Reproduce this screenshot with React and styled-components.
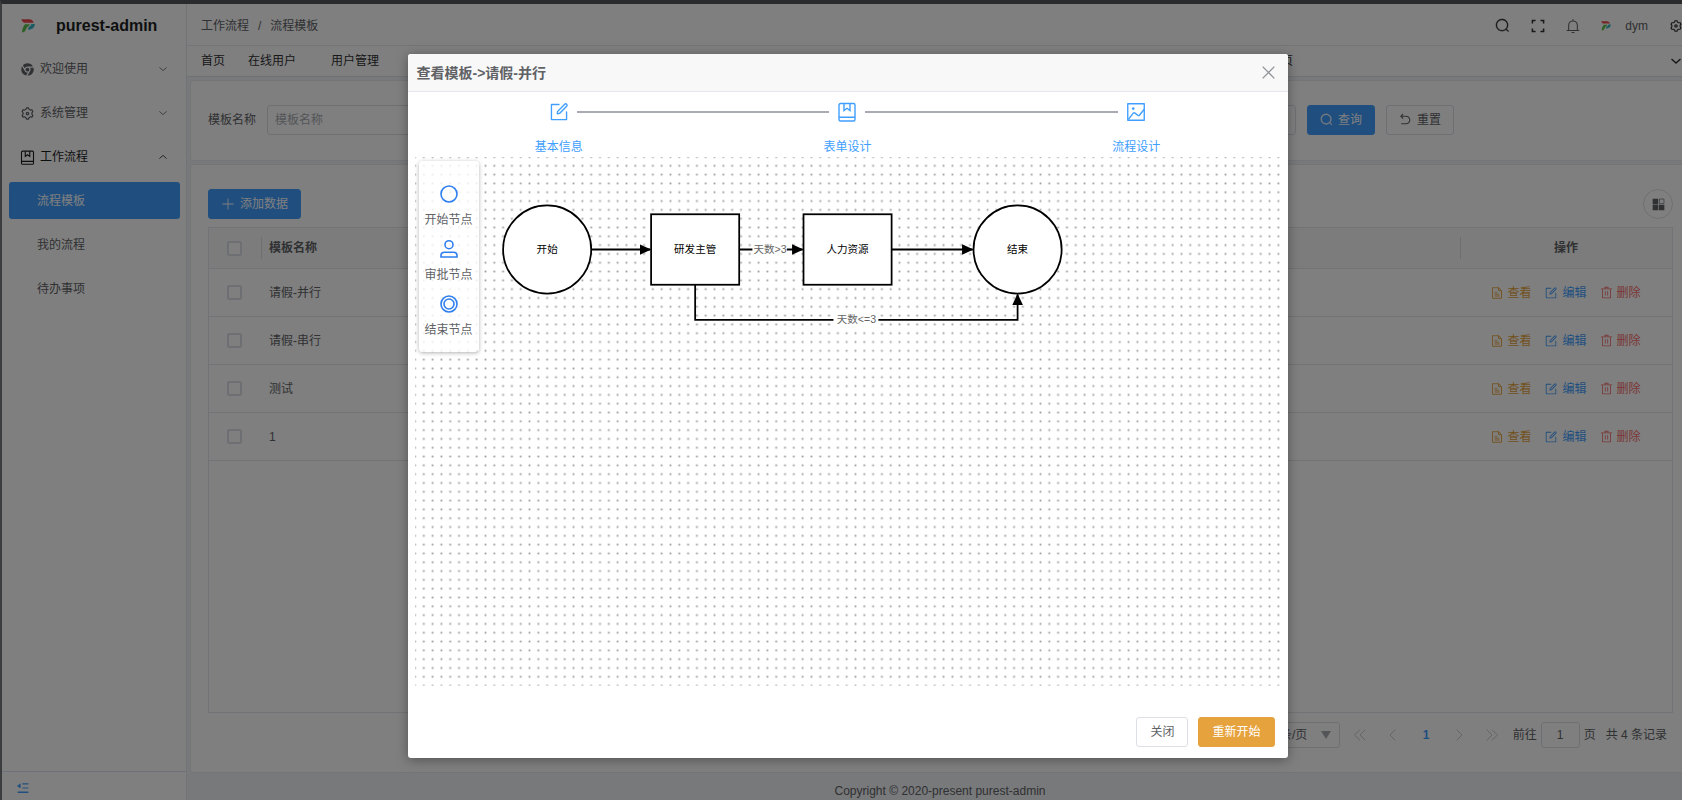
import React, { useState } from "react";
import styled, { createGlobalStyle } from "styled-components";
import { RiChromeFill, RiSettings3Line, RiArrowGoBackLine } from "react-icons/ri";

const GlobalStyle = createGlobalStyle`
  * {
    box-sizing: border-box;
  }

  body {
    margin: 0;
    overflow: hidden;
    background: #2a2b2d;
    font-family: "Liberation Sans", "Noto Sans CJK SC", sans-serif;
    font-size: 12px;
    line-height: 20px;
    color: #303133;
  }

  button,
  input,
  select {
    font: inherit;
    color: inherit;
  }

  svg {
    display: block;
    flex: none;
  }
`;

/* icons */

const Icon = ({ size = 14, children, box = 1024 }) => (
  <svg width={size} height={size} viewBox={`0 0 ${box} ${box}`} fill="currentColor" aria-hidden="true">
    {children}
  </svg>
);

const LineIcon = ({ size = 14, weight = 1.5, children }) => (
  <svg
    width={size}
    height={size}
    viewBox="0 0 20 20"
    fill="none"
    stroke="currentColor"
    strokeWidth={weight}
    aria-hidden="true"
  >
    {children}
  </svg>
);

const SearchIcon = ({ size }) => (
  <Icon size={size}>
    <path d="m795.904 750.72 124.992 124.928a32 32 0 0 1-45.248 45.248L750.656 795.904a416 416 0 1 1 45.248-45.248zM480 832a352 352 0 1 0 0-704 352 352 0 0 0 0 704" stroke="currentColor" strokeWidth="24" />
  </Icon>
);

const EditIcon = ({ size }) => (
  <Icon size={size}>
    <path d="M832 512a32 32 0 1 1 64 0v352a32 32 0 0 1-32 32H160a32 32 0 0 1-32-32V160a32 32 0 0 1 32-32h352a32 32 0 0 1 0 64H192v640h640z" />
    <path d="m469.952 554.24 52.8-7.552L847.104 222.4a32 32 0 1 0-45.248-45.248L477.44 501.44l-7.552 52.8zm422.4-422.4a96 96 0 0 1 0 135.808l-331.84 331.84a32 32 0 0 1-18.112 9.088L436.8 623.68a32 32 0 0 1-36.224-36.224l15.104-105.6a32 32 0 0 1 9.024-18.112l331.904-331.84a96 96 0 0 1 135.744 0z" />
  </Icon>
);

const DeleteIcon = ({ size }) => (
  <Icon size={size}>
    <path d="M160 256H96a32 32 0 0 1 0-64h256V95.936a32 32 0 0 1 32-32h256a32 32 0 0 1 32 32V192h256a32 32 0 1 1 0 64h-64v672a32 32 0 0 1-32 32H192a32 32 0 0 1-32-32zm448-64v-64H416v64zM224 896h576V256H224zm192-128a32 32 0 0 1-32-32V416a32 32 0 0 1 64 0v320a32 32 0 0 1-32 32m192 0a32 32 0 0 1-32-32V416a32 32 0 0 1 64 0v320a32 32 0 0 1-32 32" />
  </Icon>
);

const PlusIcon = ({ size }) => (
  <Icon size={size}>
    <path d="M480 480V128a32 32 0 0 1 64 0v352h352a32 32 0 1 1 0 64H544v352a32 32 0 1 1-64 0V544H128a32 32 0 0 1 0-64z" />
  </Icon>
);

const PictureIcon = ({ size }) => (
  <Icon size={size}>
    <path d="M160 160v704h704V160zm-32-64h768a32 32 0 0 1 32 32v768a32 32 0 0 1-32 32H128a32 32 0 0 1-32-32V128a32 32 0 0 1 32-32" />
    <path d="M384 288q64 0 64 64t-64 64q-64 0-64-64t64-64M185.408 876.992l-50.816-38.912L350.72 556.032a96 96 0 0 1 134.592-17.856l1.856 1.472 122.88 99.136a32 32 0 0 0 44.992-4.864l216-269.888 49.92 39.936-215.808 269.824-.256.32a96 96 0 0 1-135.04 14.464l-122.88-99.072-.64-.512a32 32 0 0 0-44.8 5.952z" />
  </Icon>
);

const BookIcon = ({ size, weight }) => (
  <LineIcon size={size} weight={weight}>
    <rect x="2" y="1.5" width="16" height="17.5" rx="1.5" />
    <path d="M2 15.2h16M7 1.5v7l3-2.2 3 2.2v-7" />
  </LineIcon>
);

const DocumentIcon = ({ size }) => (
  <LineIcon size={size} weight={1.5}>
    <path d="M2.500 1.200h10.500L17.500 6v12.800h-15zM12.500 1.200v5h5M6 9h4M6 12h8M6 15h8" />
  </LineIcon>
);

const FullscreenIcon = ({ size }) => (
  <LineIcon size={size} weight={2.2}>
    <path d="M2 6.500V2h4.500M13.500 2H18v4.500M18 13.500V18h-4.500M6.500 18H2v-4.500" />
  </LineIcon>
);

const BellIcon = ({ size }) => (
  <LineIcon size={size} weight={1.5}>
    <path d="M1 16.5h18M3.8 16.5V9a6.2 6.2 0 0 1 12.4 0v7.5M10 .3v2.4M8 19.2h4" />
  </LineIcon>
);

const CloseIcon = ({ size }) => (
  <LineIcon size={size} weight={2}>
    <path d="M1 1l18 18M19 1 1 19" />
  </LineIcon>
);

const Chevron = ({ size = 10, weight = 2, d }) => (
  <LineIcon size={size} weight={weight}>
    <path d={d} />
  </LineIcon>
);

const DOWN = "M1 6l9 8 9-8";
const UP = "M1 14l9-8 9 8";
const LEFT = "M14 1 5 10l9 9";
const RIGHT = "M6 1l9 9-9 9";
const LEFT_DOUBLE = "M10 1 1 10l9 9M19 1l-9 9 9 9";
const RIGHT_DOUBLE = "M1 1l9 9-9 9M10 1l9 9-9 9";

const BlocksIcon = ({ size }) => (
  <Icon size={size} box={20}>
    <path d="M1 1h8.500v8.500H1zM1 10.500h8.500V19H1zM10.500 10.500H19V19h-8.500z" />
    <path d="M11.4 1.600h7v7h-7z" fill="none" stroke="currentColor" strokeWidth="1" />
  </Icon>
);

const FoldIcon = ({ size }) => (
  <Icon size={size} box={20}>
    <path d="M9 2h10v2H9zM9 9h10v2H9zM1 16h18v2.4H1zM0 6.5 6 2v9z" />
  </Icon>
);

const Logo = ({ size }) => (
  <Icon size={size} box={42}>
    <path d="M1 1h24c7 0 11 4 13 10H9C5 9 2 5 1 1z" fill="#f0484f" />
    <path d="M12 16h15l-4 5c-6 3-7 9-10 14-2 4-5 5-10 5 1-9 3-18 9-24z" fill="#5fc24c" />
    <path d="M31 15h10.500c0 9-6 16-17.500 17l-4-1 4-8c4-1 6-4 7-8z" fill="#35b8c9" />
  </Icon>
);

/* page shell; runs a little past the right and bottom of the window */

const Frame = styled.div`
  position: relative;
  display: flex;
  width: calc(100% + 11px);
  height: calc(100vh + 8px);
  border-top: 4px solid #2a2b2d;
  border-left: 2px solid #3c3d3f;
  background: #f0f2f5;
`;

const Sidebar = styled.aside`
  display: flex;
  flex-direction: column;
  width: 185px;
  flex: none;
  background: #fff;
  border-right: 1px solid #e4e7ed;
`;

const Brand = styled.h1`
  display: flex;
  align-items: center;
  gap: 21px;
  height: 43px;
  margin: 0;
  padding-left: 19px;
  font-size: 16px;
  font-weight: bold;
  color: #1d1e1f;
`;

const Menu = styled.nav`
  flex: 1;
`;

const MenuButton = styled.button`
  display: flex;
  align-items: center;
  gap: 5px;
  width: 100%;
  height: 44px;
  padding: 0 19px 0 18px;
  border: 0;
  background: none;
  text-align: left;
  color: ${(props) => (props.$open ? "#1d1e1f" : "#606266")};

  span {
    flex: 1;
  }
`;

const SubLink = styled.a`
  display: flex;
  align-items: center;
  height: 37px;
  margin: 3px 6px 7px 7px;
  padding-left: 28px;
  border-radius: 3px;
  text-decoration: none;
  color: ${(props) => (props.$active ? "#fff" : "#606266")};
  background: ${(props) => (props.$active ? "#409eff" : "none")};
`;

const FoldBar = styled.button`
  display: flex;
  align-items: center;
  height: 37px;
  padding: 0 0 4px 15px;
  border: 0;
  border-top: 1px solid #dce4f0;
  background: none;
  color: #409eff;
`;

const Main = styled.div`
  display: flex;
  flex-direction: column;
  flex: 1;
  min-width: 0;
`;

const Header = styled.header`
  display: flex;
  align-items: center;
  height: 42px;
  padding: 2px 10px 0 14px;
  background: #fff;
  border-bottom: 1px solid #e8eaee;
`;

const Breadcrumb = styled.nav`
  display: flex;
  gap: 9px;
  flex: 1;
  color: #606266;
`;

const HeaderTools = styled.div`
  display: flex;
  align-items: center;
  gap: 21px;
`;

const IconButton = styled.button`
  display: flex;
  padding: 0;
  border: 0;
  background: none;
  color: ${(props) => props.$color || "#303133"};
`;

const User = styled.div`
  display: flex;
  align-items: center;
  gap: 14px;
  color: #606266;
`;

const TabBar = styled.nav`
  display: flex;
  align-items: center;
  height: 31px;
  padding: 0 12px 0 2px;
  background: #fff;
  border-bottom: 1px solid #dfe3ea;
`;

const Tab = styled.a`
  padding: 0 ${(props) => (props.$closable ? 23 : 11)}px 0 12px;
  color: #303133;
  text-decoration: none;
`;

const TabGap = styled.div`
  flex: 0 1 867px;
`;

const TabMore = styled.div`
  margin-left: auto;
`;

const Card = styled.section`
  display: flex;
  flex-direction: column;
  margin: 3px 2px 0 3px;
  background: #fff;
  border: 1px solid #e8eaee;
  border-radius: 3px;
`;

const QueryForm = styled.form`
  display: flex;
  align-items: center;
  gap: 11px;
  height: 79px;
  padding: 16px 17px 18px;

  label {
    flex: none;
    color: #606266;
  }
`;

const TextInput = styled.input`
  flex: 0 1 ${(props) => props.$width}px;
  min-width: 0;
  height: 30px;
  padding: 0 7px;
  border: 1px solid #dcdfe6;
  border-radius: 3px;
  background: #fff;
  text-align: ${(props) => props.$align || "left"};

  &::placeholder {
    color: #a8abb2;
  }
`;

const Button = styled.button`
  display: flex;
  align-items: center;
  justify-content: center;
  flex: none;
  gap: 5px;
  height: 30px;
  padding: 0 12px;
  border: 1px solid ${(props) => props.$bg || "#dcdfe6"};
  border-radius: 3px;
  background: ${(props) => props.$bg || "#fff"};
  color: ${(props) => (props.$bg ? "#fff" : "#606266")};
`;

const ListCard = styled(Card)`
  flex: 1;
  padding: 24px 17px 0;
`;

const Toolbar = styled.div`
  display: flex;
  justify-content: space-between;
  margin-bottom: 8px;
`;

const RoundButton = styled.button`
  display: flex;
  align-items: center;
  justify-content: center;
  width: 30px;
  height: 30px;
  padding: 0;
  border: 1px solid #dcdfe6;
  border-radius: 50%;
  background: #fff;
  color: #606266;
`;

const TableWrap = styled.div`
  flex: 1;
  border: 1px solid #e4e7ed;
`;

const Table = styled.table`
  width: 100%;
  table-layout: fixed;
  border-collapse: separate;
  border-spacing: 0;

  th,
  td {
    height: 48px;
    padding: 0 8px;
    text-align: left;
    font-weight: normal;
    color: #606266;
    border-bottom: 1px solid #e4e7ed;
  }

  th {
    height: 41px;
    font-weight: bold;
    background: #f8f8f9;
  }

  th:first-child,
  td:first-child {
    width: 52px;
    padding-left: 18px;
  }

  th:last-child,
  td:last-child {
    width: 212px;
    text-align: center;
  }
`;

const HeadCell = styled.div`
  display: flex;
  align-items: center;
  height: 22px;
  margin-left: -8px;
  padding-left: 7px;
  justify-content: ${(props) => (props.$center ? "center" : "flex-start")};
  border-left: 1px solid #dcdfe6;
`;

const Checkbox = styled.input`
  display: block;
  appearance: none;
  width: 15px;
  height: 15px;
  margin: 0;
  border: 2px solid #dcdfe6;
  border-radius: 2px;
  background: #fff;
`;

const Actions = styled.div`
  display: flex;
  justify-content: center;
  gap: 13px;
`;

const Action = styled.button`
  display: flex;
  align-items: center;
  gap: 4px;
  padding: 0;
  border: 0;
  background: none;
  color: ${(props) => props.$color};
`;

const Pager = styled.div`
  display: flex;
  align-items: center;
  justify-content: flex-end;
  height: 59px;
  padding: 0 6px 16px 0;
  color: #606266;
`;

const PageSize = styled.label`
  position: relative;
  margin-right: 4px;

  select {
    appearance: none;
    display: block;
    width: 90px;
    height: 26px;
    padding: 0 0 0 16px;
    border: 1px solid #dcdfe6;
    border-radius: 3px;
    background: #fff;
  }

  svg {
    position: absolute;
    top: 8px;
    right: 9px;
    color: #a8abb2;
  }
`;

const PageNav = styled.div`
  display: flex;
  align-items: center;
  margin-right: 4px;

  button {
    display: flex;
    align-items: center;
    justify-content: center;
    width: 33px;
    padding: 0;
    border: 0;
    background: none;
    color: #c0c4cc;
  }

  button[aria-current] {
    font-weight: bold;
    color: #409eff;
  }
`;

const Jump = styled.label`
  display: flex;
  align-items: center;
  gap: 4px;
  margin-right: 10px;

  input {
    flex: none;
    width: 39px;
    height: 26px;
    padding: 0;
  }
`;

const Footer = styled.footer`
  display: flex;
  align-items: center;
  justify-content: center;
  height: 35px;
  color: #606266;
`;

/* dialog */

const Overlay = styled.div`
  position: absolute;
  inset: 0;
  display: flex;
  align-items: center;
  justify-content: center;
  background: rgba(0, 0, 0, 0.5);
`;

const Dialog = styled.div`
  width: 880px;
  max-width: 94%;
  background: #fff;
  border-radius: 3px;
  overflow: hidden;
  box-shadow: 0 2px 12px rgba(0, 0, 0, 0.35);
`;

const DialogHead = styled.div`
  display: flex;
  align-items: center;
  justify-content: space-between;
  height: 38px;
  padding: 0 13px 0 9px;
  background: #f8f8f8;
  border-bottom: 1px solid #e4e7ed;

  h2 {
    margin: 0;
    font-size: 14px;
    color: #606266;
  }
`;

const Steps = styled.ol`
  display: grid;
  grid-template-columns: repeat(3, 1fr);
  height: 65px;
  margin: 0;
  padding: 9px 7px 0;
  list-style: none;
`;

const Step = styled.li`
  position: relative;
  display: flex;
  flex-direction: column;
  align-items: center;
  gap: 14px;
  color: #409eff;

  svg {
    height: 22px;
  }

  &:not(:last-child)::after {
    content: "";
    position: absolute;
    top: 10px;
    left: calc(50% + 18px);
    width: calc(100% - 36px);
    height: 2px;
    background: #a8abb2;
  }
`;

const Canvas = styled.div`
  position: relative;
  margin: 0 7px;

  > svg {
    width: 100%;
    height: auto;
    aspect-ratio: 866 / 529;
  }
`;

const Palette = styled.div`
  position: absolute;
  top: 4px;
  left: 4px;
  display: flex;
  flex-direction: column;
  gap: 9px;
  padding: 23px 6px 12px;
  border-radius: 4px;
  background: rgba(255, 255, 255, 0.8);
  box-shadow: 0 1px 4px rgba(0, 0, 0, 0.3);
`;

const PaletteItem = styled.div`
  display: flex;
  flex-direction: column;
  align-items: center;
  gap: 6px;
  color: #606266;

  svg {
    color: #2f7fee;
  }
`;

const DialogFoot = styled.div`
  display: flex;
  justify-content: flex-end;
  gap: 10px;
  padding: 31px 13px 11px;

  button {
    padding: 0 13px;
  }
`;

const NodeText = styled.text`
  font-size: 12px;
  text-anchor: middle;
  fill: ${(props) => (props.$edge ? "#666" : "#000")};
`;

const nodes = [
  { type: "circle", x: 150, text: "开始" },
  { type: "rect", x: 318, text: "研发主管" },
  { type: "rect", x: 491, text: "人力资源" },
  { type: "circle", x: 684, text: "结束" },
];

const NODE_Y = 105;

function FlowChart() {
  return (
    <svg viewBox="0 0 983 600" preserveAspectRatio="xMinYMin meet">
      <defs>
        <pattern id="dots" x="-5" y="-5" width="10" height="10" patternUnits="userSpaceOnUse">
          <rect x="4" y="4" width="2" height="2" fill="#999" />
        </pattern>
        <marker id="arrow" markerUnits="userSpaceOnUse" markerWidth="14" markerHeight="14" refX="12" refY="7" orient="auto">
          <path d="M0 1l13 6-13 6z" />
        </marker>
      </defs>
      <rect width="983" height="600" fill="url(#dots)" />
      <g fill="none" stroke="#000" strokeWidth="2">
        <path d="M200 105h67" markerEnd="url(#arrow)" />
        <path d="M368 105h72" markerEnd="url(#arrow)" />
        <path d="M541 105h92" markerEnd="url(#arrow)" />
        <path d="M318 145v40h366v-29" markerEnd="url(#arrow)" />
      </g>
      {nodes.map((n) => (
        <g key={n.text}>
          {n.type === "circle" ? (
            <circle cx={n.x} cy={NODE_Y} r="50" fill="#fff" stroke="#000" strokeWidth="2" />
          ) : (
            <rect x={n.x - 50} y={NODE_Y - 40} width="100" height="80" fill="#fff" stroke="#000" strokeWidth="2" />
          )}
          <NodeText x={n.x} y={NODE_Y + 4}>
            {n.text}
          </NodeText>
        </g>
      ))}
      <rect x="383" y="97" width="39" height="16" fill="#fff" />
      <NodeText $edge x="403" y="109">
        天数&gt;3
      </NodeText>
      <rect x="475" y="177" width="51" height="16" fill="#fff" />
      <NodeText $edge x="501" y="188">
        天数&lt;=3
      </NodeText>
    </svg>
  );
}

const steps = [
  { text: "基本信息", icon: <EditIcon size={22} /> },
  { text: "表单设计", icon: <BookIcon size={20} weight={1.4} /> },
  { text: "流程设计", icon: <PictureIcon size={22} /> },
];

const palette = [
  { text: "开始节点", icon: <circle cx="10" cy="10" r="8" /> },
  {
    text: "审批节点",
    icon: (
      <>
        <circle cx="10" cy="5.700" r="4" />
        <path d="M2 18v-1.500c0-2 1.500-3.300 3.500-3.300h9c2 0 3.500 1.300 3.500 3.300V18z" />
      </>
    ),
  },
  {
    text: "结束节点",
    icon: (
      <>
        <circle cx="10" cy="10" r="8" />
        <circle cx="10" cy="10" r="5" />
      </>
    ),
  },
];

function TemplateDialog({ onClose }) {
  return (
    <Overlay>
      <Dialog role="dialog" aria-labelledby="dialog-title">
        <DialogHead>
          <h2 id="dialog-title">查看模板-&gt;请假-并行</h2>
          <IconButton $color="#909399" aria-label="关闭" onClick={onClose}>
            <CloseIcon size={13} />
          </IconButton>
        </DialogHead>
        <Steps>
          {steps.map((s) => (
            <Step key={s.text}>
              {s.icon}
              {s.text}
            </Step>
          ))}
        </Steps>
        <Canvas>
          <FlowChart />
          <Palette>
            {palette.map((p) => (
              <PaletteItem key={p.text}>
                <LineIcon size={20} weight={1.6}>
                  {p.icon}
                </LineIcon>
                {p.text}
              </PaletteItem>
            ))}
          </Palette>
        </Canvas>
        <DialogFoot>
          <Button onClick={onClose}>关闭</Button>
          <Button $bg="#e6a23c">重新开始</Button>
        </DialogFoot>
      </Dialog>
    </Overlay>
  );
}

const rows = ["请假-并行", "请假-串行", "测试", "1"];

function TemplateTable() {
  return (
    <Table>
      <thead>
        <tr>
          <th>
            <Checkbox type="checkbox" aria-label="全选" />
          </th>
          <th>
            <HeadCell>模板名称</HeadCell>
          </th>
          <th>
            <HeadCell $center>操作</HeadCell>
          </th>
        </tr>
      </thead>
      <tbody>
        {rows.map((name) => (
          <tr key={name}>
            <td>
              <Checkbox type="checkbox" aria-label={name} />
            </td>
            <td>{name}</td>
            <td>
              <Actions>
                <Action $color="#e6a23c">
                  <DocumentIcon size={12} />
                  查看
                </Action>
                <Action $color="#409eff">
                  <EditIcon size={14} />
                  编辑
                </Action>
                <Action $color="#f56c6c">
                  <DeleteIcon size={13} />
                  删除
                </Action>
              </Actions>
            </td>
          </tr>
        ))}
      </tbody>
    </Table>
  );
}

function App() {
  const [open, setOpen] = useState(true);

  return (
    <>
      <GlobalStyle />
      <Frame>
        <Sidebar>
          <Brand>
            <Logo size={14} />
            purest-admin
          </Brand>
          <Menu>
            <MenuButton>
              <RiChromeFill size={15} />
              <span>欢迎使用</span>
              <Chevron d={DOWN} size={8} />
            </MenuButton>
            <MenuButton>
              <RiSettings3Line size={15} />
              <span>系统管理</span>
              <Chevron d={DOWN} size={8} />
            </MenuButton>
            <MenuButton $open>
              <BookIcon size={15} weight={1.5} />
              <span>工作流程</span>
              <Chevron d={UP} size={8} />
            </MenuButton>
            <SubLink $active href="#template">
              流程模板
            </SubLink>
            <SubLink href="#mine">我的流程</SubLink>
            <SubLink href="#todo">待办事项</SubLink>
          </Menu>
          <FoldBar aria-label="折叠菜单">
            <FoldIcon size={12} />
          </FoldBar>
        </Sidebar>

        <Main>
          <Header>
            <Breadcrumb>
              <span>工作流程</span>
              <span>/</span>
              <span>流程模板</span>
            </Breadcrumb>
            <HeaderTools>
              <IconButton aria-label="搜索">
                <SearchIcon size={15} />
              </IconButton>
              <IconButton aria-label="全屏">
                <FullscreenIcon size={14} />
              </IconButton>
              <IconButton aria-label="通知" $color="#606266">
                <BellIcon size={14} />
              </IconButton>
              <User>
                <Logo size={10} />
                dym
              </User>
              <IconButton aria-label="设置">
                <RiSettings3Line size={14} />
              </IconButton>
            </HeaderTools>
          </Header>
          <TabBar>
            <Tab href="#home">首页</Tab>
            <Tab href="#online" $closable>
              在线用户
            </Tab>
            <Tab href="#users" $closable>
              用户管理
            </Tab>
            <TabGap />
            <Tab href="#page">页</Tab>
            <TabMore>
              <Chevron d={DOWN} weight={3} />
            </TabMore>
          </TabBar>

          <Card>
            <QueryForm onSubmit={(e) => e.preventDefault()}>
              <label htmlFor="name">模板名称</label>
              <TextInput id="name" placeholder="模板名称" $width={1029} />
              <Button $bg="#409eff">
                <SearchIcon size={13} />
                查询
              </Button>
              <Button type="reset">
                <RiArrowGoBackLine size={13} />
                重置
              </Button>
            </QueryForm>
          </Card>

          <ListCard>
            <Toolbar>
              <Button $bg="#409eff">
                <PlusIcon size={14} />
                添加数据
              </Button>
              <RoundButton aria-label="列设置">
                <BlocksIcon size={13} />
              </RoundButton>
            </Toolbar>
            <TableWrap>
              <TemplateTable />
            </TableWrap>
            <Pager>
              <PageSize>
                <select aria-label="每页条数">
                  <option>50条/页</option>
                </select>
                <Icon size={10} box={10}>
                  <path d="M0 1h10L5 9z" />
                </Icon>
              </PageSize>
              <PageNav>
                <button aria-label="首页">
                  <Chevron d={LEFT_DOUBLE} size={12} weight={1.5} />
                </button>
                <button aria-label="上一页">
                  <Chevron d={LEFT} size={12} weight={1.5} />
                </button>
                <button aria-current="page">1</button>
                <button aria-label="下一页">
                  <Chevron d={RIGHT} size={12} weight={1.5} />
                </button>
                <button aria-label="末页">
                  <Chevron d={RIGHT_DOUBLE} size={12} weight={1.5} />
                </button>
              </PageNav>
              <Jump>
                前往
                <TextInput defaultValue="1" $width={39} $align="center" />页
              </Jump>
              <span>共 4 条记录</span>
            </Pager>
          </ListCard>

          <Footer>Copyright © 2020-present purest-admin</Footer>
        </Main>

        {open && <TemplateDialog onClose={() => setOpen(false)} />}
      </Frame>
    </>
  );
}

export default App;
